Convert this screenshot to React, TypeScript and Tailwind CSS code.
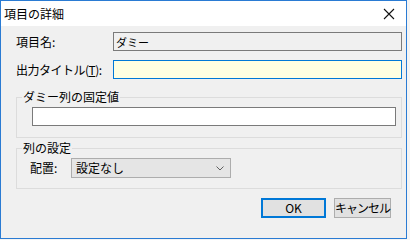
import React from 'react';

const font = { fontFamily: '"Noto Sans CJK JP", "Noto Sans", sans-serif' };

const App: React.FC = () => {
    return (
        <div className="w-[410px] h-[240px] bg-[#f4f4f4] text-[12px] leading-[14px] text-black" style={font}>
            <div className="w-[407px] h-[239px] border border-[#2a7bd3] flex flex-col bg-[#f0f0f0]">
                {/* title bar */}
                <div className="h-[25px] bg-white flex items-center justify-between pl-[3px] pr-[11px]">
                    <span className="text-[12px] mt-[1px]">項目の詳細</span>
                    <svg width="12" height="12" viewBox="0 0 12 12" className="mt-[1px]">
                        <path d="M1 1 L11 11 M11 1 L1 11" stroke="#111" strokeWidth="1.1" fill="none" />
                    </svg>
                </div>

                <div className="flex-1 flex flex-col pt-[6px] pl-[15px] pr-[4px]">
                    <div className="flex items-center">
                        <label className="w-[97px]">項目名:</label>
                        <div className="flex-1 h-[19px] border border-[#7a7a7a] bg-[#f0f0f0] flex items-center px-[2px] text-[11px]">
                            ダミー
                        </div>
                    </div>

                    <div className="flex items-center mt-[9px]">
                        <label className="w-[97px] tracking-[-0.5px]">出力タイトル(<span className="underline">T</span>):</label>
                        <input className="flex-1 h-[19px] border border-[#0078d7] bg-[#ffffe1] outline-none px-[2px]" />
                    </div>

                    <fieldset className="mt-[11px] border border-[#dcdcdc] pl-[15px] pr-[5px] pb-[11px] pt-[3px]">
                        <legend className="-ml-[10px] px-[1px] text-[12px] leading-[14px]">ダミー列の固定値</legend>
                        <input className="w-full h-[19px] border border-[#7a7a7a] bg-white outline-none px-[2px] block" />
                    </fieldset>

                    <fieldset className="mt-[3px] border border-[#dcdcdc] pl-[13px] pr-[5px] pb-[10px] pt-[3px]">
                        <legend className="-ml-[8px] px-[1px] text-[12px] leading-[14px]">列の設定</legend>
                        <div className="flex items-center">
                            <label className="w-[41px]">配置:</label>
                            <div className="w-[160px] h-[20px] border border-[#adadad] bg-[#e5e5e5] flex items-center justify-between pl-[4px] pr-[6px]">
                                <span>設定なし</span>
                                <svg width="8" height="5" viewBox="0 0 8 5">
                                    <path d="M0.5 0.5 L4 4 L7.5 0.5" stroke="#606060" strokeWidth="1" fill="none" />
                                </svg>
                            </div>
                        </div>
                    </fieldset>

                    <div className="flex justify-end gap-[8px] mt-[9px] mr-[11px]">
                        <button className="w-[65px] h-[20px] border-2 border-[#0078d7] bg-[#e1e1e1] flex items-center justify-center">
                            OK
                        </button>
                        <button className="w-[57px] h-[20px] border border-[#adadad] bg-[#e1e1e1] flex items-center justify-center whitespace-nowrap tracking-[-1px] px-0">
                            キャンセル
                        </button>
                    </div>
                </div>
            </div>
        </div>
    );
};

export default App;
